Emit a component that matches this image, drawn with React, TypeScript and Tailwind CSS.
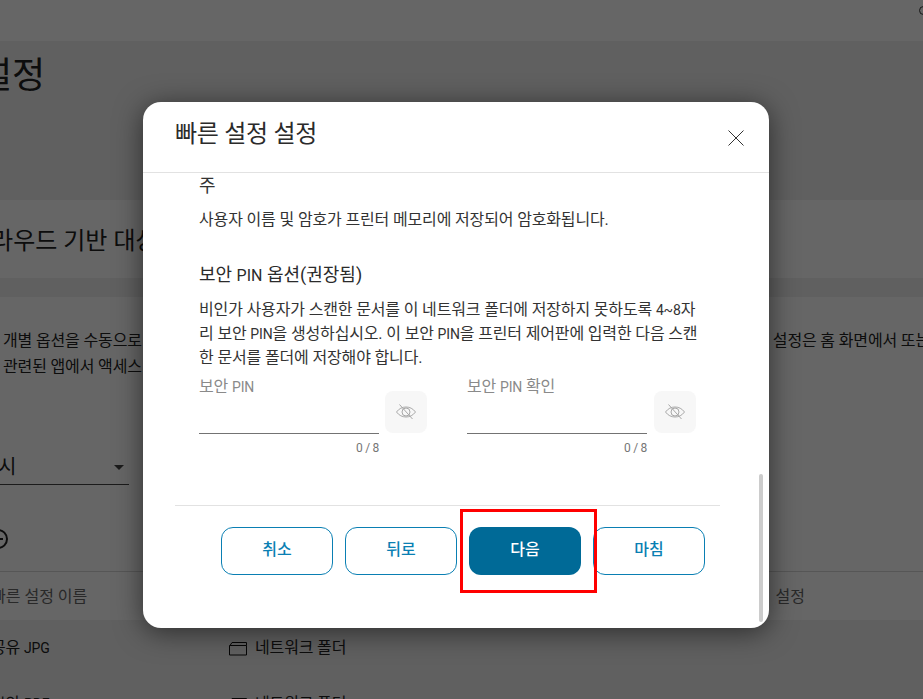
import React from "react";

const font = { fontFamily: '"Roboto","Noto Sans CJK KR",sans-serif' };

function L({ children }: { children: string }) {
  return <span className="text-[14px]">{children}</span>;
}

function EyeOff() {
  return (
    <svg width="20" height="16" viewBox="0 0 20 16" fill="none" stroke="#a8a8a8" strokeWidth="1">
      <path d="M0.5 8C3 4.6 6.3 3 10 3s7 1.6 9.500 5c-2.500 3.400-5.800 5-9.500 5S3 11.400 0.500 8Z" />
      <circle cx="10" cy="8" r="4" />
      <path d="M3.500 0.500 16.500 15" />
    </svg>
  );
}

function PinField({ label, suffix }: { label: string; suffix?: string }) {
  return (
    <div className="flex w-[229px] items-start">
      <div className="w-[180px]">
        <div className="h-[57px] border-b border-[#737373] text-[16px] leading-[20px] tracking-[-0.15px] text-[#8a8a8a]">
          {label} <L>PIN</L>
          {suffix ? ` ${suffix}` : ""}
        </div>
        <div className="mt-[6px] text-right text-[12px] leading-[16px] tracking-[-0.3px] text-[#767676]">0 / 8</div>
      </div>
      <div className={suffix ? "ml-[7px] mt-[14px] flex h-[42px] w-[42px] items-center justify-center rounded-[8px] bg-[#f7f7f7]" : "ml-[6px] mt-[14px] flex h-[42px] w-[42px] items-center justify-center rounded-[8px] bg-[#f7f7f7]"}>
        <EyeOff />
      </div>
    </div>
  );
}

function Btn({ children, primary }: { children: string; primary?: boolean }) {
  return (
    <button
      className={
        primary
          ? "h-[48px] w-[112px] rounded-[12px] bg-[#006a97] pb-[2px] text-[16px] font-medium text-white"
          : "h-[48px] w-[112px] rounded-[12px] border border-[#0a7fb3] bg-white pb-[2px] text-[16px] font-medium text-[#0a7fb3]"
      }
    >
      {children}
    </button>
  );
}

function Folder() {
  return (
    <svg width="18" height="16" viewBox="0 0 18 16" fill="none" stroke="#111" strokeWidth="1" className="shrink-0">
      <path d="M0.500 15V5.500H17.500V15Z" />
      <path d="M1 5.500 3 2.500H17.500V5.500" />
    </svg>
  );
}

export default function App() {
  return (
    <div className="relative h-[699px] w-full overflow-hidden bg-[#efefef] text-[#222]" style={font}>
      <header className="relative h-[41px] bg-white">
        <span className="absolute left-[919px] top-[6px] h-[9px] w-[9px] rounded-full border border-[#333]" />
      </header>

      <div className="-ml-[21px] h-[159px] pt-[10px] text-[36px] leading-[50px]">설정</div>

      <section className="flex h-[78px] items-center whitespace-nowrap bg-white pt-[3px] text-[24px]">
        <span className="-ml-[31px]">클라우드 기반 대상</span>
      </section>

      <section className="mt-[19px] h-[379px] bg-white">
        <div className="h-[274px] whitespace-nowrap pt-[31px] text-[16px] leading-[26px] tracking-[-0.15px]">
          <div className="flex justify-between">
            <span className="ml-[3px]">개별 옵션을 수동으로</span>
            <span className="-mr-[7px]">설정은 홈 화면에서 또는</span>
          </div>
          <div className="ml-[3px]">관련된 앱에서 액세스</div>
          <div className="mt-[70px] flex h-[35px] w-[129px] items-center justify-between border-b border-[#444] pr-[5px] text-[20px]">
            <span className="-ml-[2px]">시</span>
            <span className="h-0 w-0 border-x-[5px] border-t-[5px] border-x-transparent border-t-[#444]" />
          </div>
          <div className="-ml-[12px] mt-[44px] flex h-[20px] w-[20px] items-center justify-center rounded-full border-[2px] border-[#222]">
            <span className="h-[2px] w-[10px] bg-[#222]" />
          </div>
        </div>
        <div className="flex h-[49px] items-center justify-between border-t border-[#d8d8d8] pt-[2px] text-[16px] text-[#666]">
          <span className="-ml-[9px]">빠른 설정 이름</span>
          <span className="mr-[118px]">설정</span>
        </div>
        <div className="flex h-[56px] items-center bg-[#efefef] text-[16px] tracking-[-0.15px]">
          <span className="-ml-[9px] w-[238px]">공유 <L>JPG</L></span>
          <span className="flex items-center gap-[8px]"><Folder />네트워크 폴더</span>
        </div>
        <div className="flex h-[56px] items-center text-[16px] tracking-[-0.15px]">
          <span className="-ml-[9px] w-[238px]">보안 <L>PDF</L></span>
          <span className="flex items-center gap-[8px]"><Folder />네트워크 폴더</span>
        </div>
      </section>

      <div className="absolute inset-0 bg-black/60" />

      <div className="absolute left-[143px] top-[102px] flex h-[526px] w-[626px] flex-col overflow-hidden rounded-[18px] bg-white shadow-[0_4px_28px_rgba(0,0,0,0.55)]">
        <div className="flex h-[71px] shrink-0 items-start justify-between border-b border-[#e2e2e2] pl-[32px] pr-[25px]">
          <h2 className="pt-[14px] text-[24px] font-normal leading-[36px] tracking-[-0.3px] text-[#2b2b2b]">빠른 설정 설정</h2>
          <svg width="16" height="16" viewBox="0 0 16 16" stroke="#333" strokeWidth="1" className="mt-[28px]">
            <path d="M0.500 0.500 15.500 15.500M15.500 0.500 0.500 15.500" />
          </svg>
        </div>

        <div className="flex-1 overflow-hidden pl-[32px] pr-[49px]">
          <div className="pl-[24px] pr-[20px] text-[#333]">
            <div className="text-[18px] leading-[26px]">주</div>
            <p className="mt-[9px] text-[16px] leading-[24px] tracking-[-0.15px]">사용자 이름 및 암호가 프린터 메모리에 저장되어 암호화됩니다.</p>
            <h3 className="mt-[31px] whitespace-nowrap text-[18px] font-normal leading-[24px] text-[#2b2b2b]">
              보안 <span className="text-[16px]">PIN</span> 옵션(권장됨)
            </h3>
            <p className="mt-[10px] whitespace-nowrap text-[16px] leading-[24px] tracking-[-0.15px]">
              비인가 사용자가 스캔한 문서를 이 네트워크 폴더에 저장하지 못하도록 <L>4~8</L>자
              <br />
              리 보안 <L>PIN</L>을 생성하십시오. 이 보안 <L>PIN</L>을 프린터 제어판에 입력한 다음 스캔
              <br />
              한 문서를 폴더에 저장해야 합니다.
            </p>
            <div className="mt-[7px] flex gap-[39px]">
              <PinField label="보안" />
              <PinField label="보안" suffix="확인" />
            </div>
          </div>
          <div className="mt-[49px] flex gap-[12px] border-t border-[#e2e2e2] pl-[46px] pt-[21px]">
            <Btn>취소</Btn>
            <Btn>뒤로</Btn>
            <Btn primary>다음</Btn>
            <Btn>마침</Btn>
          </div>
        </div>

        <div className="absolute left-[616px] top-[372px] h-[148px] w-[4px] rounded-full bg-[#cccccc]" />
      </div>

      <div className="absolute left-[460px] top-[509px] h-[84px] w-[137px] border-[3px] border-[#ff0000]" />
    </div>
  );
}
